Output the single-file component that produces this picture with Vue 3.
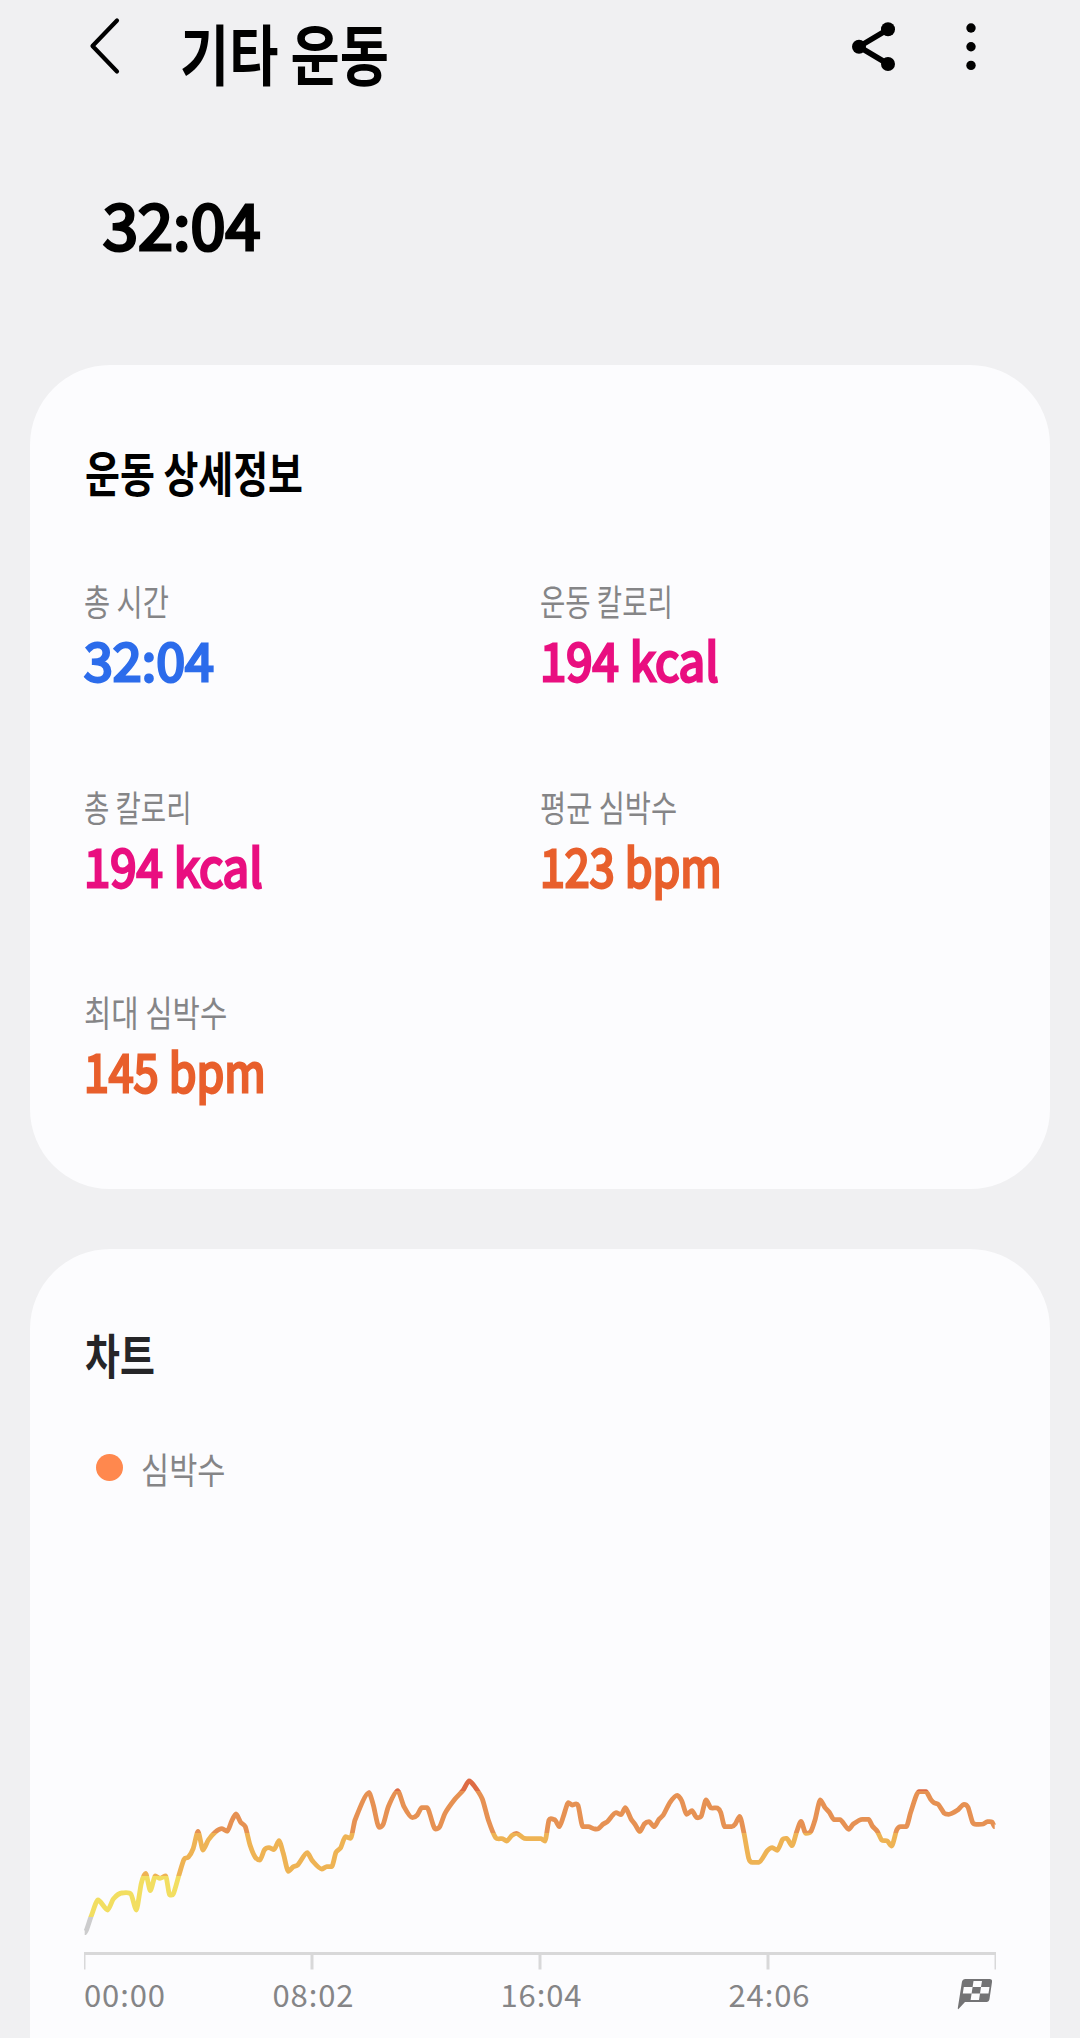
<script setup>
const details = [
  { label: '총 시간', value: '32:04', unit: '', tone: 'time', fit: 'fit-plain' },
  { label: '운동 칼로리', value: '194', unit: 'kcal', tone: 'calorie', fit: 'fit-narrow' },
  { label: '총 칼로리', value: '194', unit: 'kcal', tone: 'calorie', fit: 'fit-narrow' },
  { label: '평균 심박수', value: '123', unit: 'bpm', tone: 'heart', fit: 'fit-plain' },
  { label: '최대 심박수', value: '145', unit: 'bpm', tone: 'heart', fit: 'fit-wide' },
]

const times = ['00:00', '08:02', '16:04', '24:06']

// Heart-rate samples as x,y pairs in chart units
const heartRate = `0.7,182.7 7,166.7 14,150 23.7,160 29.3,149 37.7,143 47,144.3 52.3,160 57.3,133.3 61.7,123.5
66.3,140.7 71.3,126 76,128.3 81.7,126 85.7,145 89.3,144 95,125 100,109.3 104.3,107.3 109.3,98.3 114,81.5 119,100
124.3,90 131,82.3 138,78.7 143.3,81.3 147.7,71 152,64 156.7,72.3 161.3,76.7 166,95 171.3,107.3 176,110 180.3,100
185,97.7 190,99.7 195,90.7 199.3,103.3 204.3,121.3 209.3,116.7 213.7,115 223.3,102.7 228.3,110.7 237.7,119
242.7,116.7 247.7,116.7 252,102.3 256.7,97.7 261.3,86.7 266.7,88.3 271,70 285,42.7 289.3,55 295,77.3 299.3,74
304.3,56.7 313.7,40.7 320,56.7 328.3,67.7 333.3,65 337.7,57.7 343,57.7 351.3,79 355.7,76.7 361,63.3 371,49
379.3,40 385,31 389.3,34.7 398.3,49 404.3,70 411.7,87.7 418.7,88.7 422.7,91 427.7,85.7 432.3,83.3 440.3,88.3
457,88.7 461,91 465,70 470.7,69.7 475.3,76.7 479.3,66.7 484.3,52.7 488,55 494,55.3 498.7,76.7 504.3,76.7
511,79 514.3,78.7 519.3,74 523.3,71.7 532,62.7 537,64.7 541.3,57.7 547,69 551,74.3 555.7,81.7 560.3,74 565,71.7
570.3,76.7 575,69.3 579.3,65 586,52.3 593.3,45.3 597.7,50.7 602.7,64.3 608,60.7 612.7,67.7 617.3,66 622,50
626.7,57.7 633.3,58 636.7,62.3 640.7,76.7 647.7,76.7 651.3,74 655.7,66.3 660,83.3 664.7,108.3 668.3,112.3
675,112.3 683.3,100.7 688.3,97.7 693.3,100.3 698.7,89.3 702.7,88.3 708,95.7 712.7,81.7 717,71.3 721.7,83.3
726.7,81.7 731,70 736.3,50 741,57.7 745.3,62.3 750,69.7 756,69.7 764.7,79.3 769.3,74 778.3,69.3 784.7,69.3
788.3,76 793.3,81.3 797.7,90 803.3,91 807.7,96 812.7,80 816.7,76.7 822.3,76.7 826.7,62.3 834.7,41.7 842,41.7
846.7,49.3 850,52.7 854.3,54.3 860.3,63.3 864.7,64.3 873.3,60.3 880,54.3 884,57.3 888.7,72.7 893.3,74.3
899.3,74 903.3,71.7 908,72 910.7,76.7`
  .split(/\s+/)
  .map((pair) => pair.split(',').map(Number))

// Gentle smoothing: horizontal control handles limited to a quarter of each step
function slope(i) {
  const a = heartRate[i - 1]
  const b = heartRate[i]
  const c = heartRate[i + 1]
  if (!a || !c || (b[1] - a[1]) * (c[1] - b[1]) <= 0) return 0
  return (c[1] - a[1]) / (c[0] - a[0])
}

const linePath = heartRate.reduce((d, [x, y], i) => {
  if (i === 0) return `M${x} ${y}`
  const [px, py] = heartRate[i - 1]
  const h = (x - px) / 4
  return `${d}C${px + h} ${py + slope(i - 1) * h} ${x - h} ${y - slope(i) * h} ${x} ${y}`
}, '')

const zones = [
  { from: 0, to: 41.5, color: '#de6b45' },
  { from: 41.5, to: 83, color: '#e69153' },
  { from: 83, to: 125.5, color: '#eeb354' },
  { from: 125.5, to: 166.5, color: '#f2de61' },
  { from: 166.5, to: 200, color: '#cccccd' },
]
</script>

<template>
  <main class="screen">
    <header class="bar">
      <svg class="back" width="40" height="64" viewBox="0 0 40 64">
        <path d="M31 8.500 6.500 34 31 59.500" fill="none" stroke="#000" stroke-width="4.200" stroke-linecap="round" stroke-linejoin="round" />
      </svg>
      <h1 class="title">기타 운동</h1>
      <svg class="share" width="44" height="50" viewBox="0 0 44 50">
        <path d="M36 7.300 7 24.700 36 42" fill="none" stroke="#000" stroke-width="5.600" />
        <circle cx="36" cy="7.300" r="7" /><circle cx="7" cy="24.700" r="7" /><circle cx="36" cy="42" r="7" />
      </svg>
      <svg class="more" width="10" height="50" viewBox="0 0 10 50">
        <circle cx="5" cy="6" r="4.700" /><circle cx="5" cy="24.700" r="4.700" /><circle cx="5" cy="43.400" r="4.700" />
      </svg>
    </header>

    <p class="hero">32:04</p>

    <section class="card details">
      <h2 class="heading">운동 상세정보</h2>
      <dl class="grid">
        <div v-for="item in details" :key="item.label" class="cell">
          <dt class="label" :class="item.fit">{{ item.label }}</dt>
          <dd class="value" :class="[item.tone, item.unit]">
            <span>{{ item.value }}</span><span v-if="item.unit" class="unit">{{ item.unit }}</span>
          </dd>
        </div>
      </dl>
    </section>

    <section class="card chart">
      <h2 class="heading dark">차트</h2>
      <div class="legend"><i class="dot"></i><span class="label fit-legend">심박수</span></div>
      <svg class="plot" width="912" height="222" viewBox="0 0 912 222">
        <defs>
          <linearGradient id="zones" gradientUnits="userSpaceOnUse" x1="0" y1="0" x2="0" y2="200">
            <template v-for="z in zones" :key="z.from">
              <stop :offset="z.from / 200" :stop-color="z.color" />
              <stop :offset="z.to / 200" :stop-color="z.color" />
            </template>
          </linearGradient>
        </defs>
        <path :d="linePath" fill="none" stroke="url(#zones)" stroke-width="4.800" stroke-linejoin="round" />
        <path d="M0 203.500H912M228 203.500V219.500M456 203.500V219.500M684 203.500V219.500" fill="none" stroke="#d8d8d9" stroke-width="3" />
        <path d="M.75 204V219.500M911.250 204V219.500" fill="none" stroke="#d8d8d9" stroke-width="1.500" />
      </svg>
      <div class="axis">
        <span v-for="t in times" :key="t" class="tick">{{ t }}</span>
        <svg class="flag" width="36" height="32" viewBox="0 0 36 32">
          <path d="M8 1H32.500Q35.500 1 35 4L32.500 21Q32 24 29.500 24H8L1.500 31Q.7 31.500 .8 30L5 3.500Q5.500 1 8 1Z" fill="#737375" />
          <path d="M16.500 3H25L24 9H15.600ZM6.800 9H15.600L14.600 15.500H5.800ZM24 9H32.500L31.500 15.500H23ZM14.600 15.500H23L22 22H13.600Z" fill="#fcfcfe" />
        </svg>
      </div>
    </section>
  </main>
</template>

<style>
body {
  margin: 0;
  background: #f0f0f2;
}
</style>

<style scoped>
.screen {
  width: 1080px;
  height: 2038px;
  overflow: hidden;
  background: #f0f0f2;
  color: #000;
  font-family: "Noto Sans CJK KR", sans-serif;
}
h1, h2, p, dl, dd {
  margin: 0;
}
.bar {
  display: flex;
  align-items: flex-start;
  height: 178px;
}
.back {
  margin: 12px 0 0 86px;
}
.title {
  flex: 1;
  margin-left: 54px;
  font-size: 66px;
  font-weight: 700;
  line-height: 102px;
  white-space: nowrap;
  transform: scaleX(0.81);
  transform-origin: left;
}
.share {
  margin: 22px 70px 0 0;
}
.more {
  margin: 22px 104px 0 0;
}
.hero {
  height: 187px;
  padding-left: 103px;
  font-size: 63px;
  font-weight: 400;
  line-height: 89px;
  -webkit-text-stroke: 3.2px currentColor;
}
.card {
  box-sizing: border-box;
  margin: 0 30px;
  padding: 76px 54px 0;
  border-radius: 80px;
  background: #fcfcfe;
}
.details {
  height: 824px;
}
.heading {
  margin-left: 1px;
  font-size: 48px;
  font-weight: 700;
  line-height: 60px;
  white-space: nowrap;
  transform: scaleX(0.79);
  transform-origin: left;
}
.dark {
  color: #252528;
}
.grid {
  display: grid;
  grid-template-columns: 456px 456px;
  row-gap: 95.500px;
  margin-top: 79px;
}
.cell {
  height: 110px;
}
.label {
  color: #858587;
  font-size: 36px;
  font-weight: 400;
  line-height: 40px;
  white-space: nowrap;
  transform-origin: left;
}
.fit-plain {
  transform: scaleX(0.79);
}
.fit-narrow {
  transform: scaleX(0.765);
}
.fit-wide {
  transform: scaleX(0.825);
}
.fit-legend {
  transform: scaleX(0.85);
}
.value {
  display: flex;
  gap: 12px;
  margin-top: 6px;
  font-size: 52px;
  font-weight: 400;
  line-height: 66px;
  transform-origin: left;
  -webkit-text-stroke: 2.8px currentColor;
}
.time {
  color: #2c6ceb;
}
.calorie {
  color: #e90f80;
}
.heart {
  color: #e85f2c;
}
.kcal {
  transform: scaleX(0.91);
}
.bpm {
  transform: scaleX(0.86);
}
.chart {
  height: 900px;
  margin-top: 60px;
  padding-top: 74px;
}
.legend {
  display: flex;
  align-items: center;
  height: 40px;
  margin-top: 65px;
  padding-left: 12px;
}
.dot {
  width: 27px;
  height: 27px;
  margin: 0 18px 2px 0;
  border-radius: 50%;
  background: #ff884e;
}
.plot {
  display: block;
  margin-top: 262px;
}
.axis {
  display: grid;
  grid-template-columns: 114px 228px 228px 228px 114px;
  color: #858587;
  font-size: 31px;
  letter-spacing: 0.9px;
  line-height: 44px;
}
.tick {
  padding-left: 3px;
  text-align: center;
}
.tick:first-child {
  padding-left: 0;
  text-align: left;
}
.flag {
  margin: 6px 3px 0 auto;
}
</style>
